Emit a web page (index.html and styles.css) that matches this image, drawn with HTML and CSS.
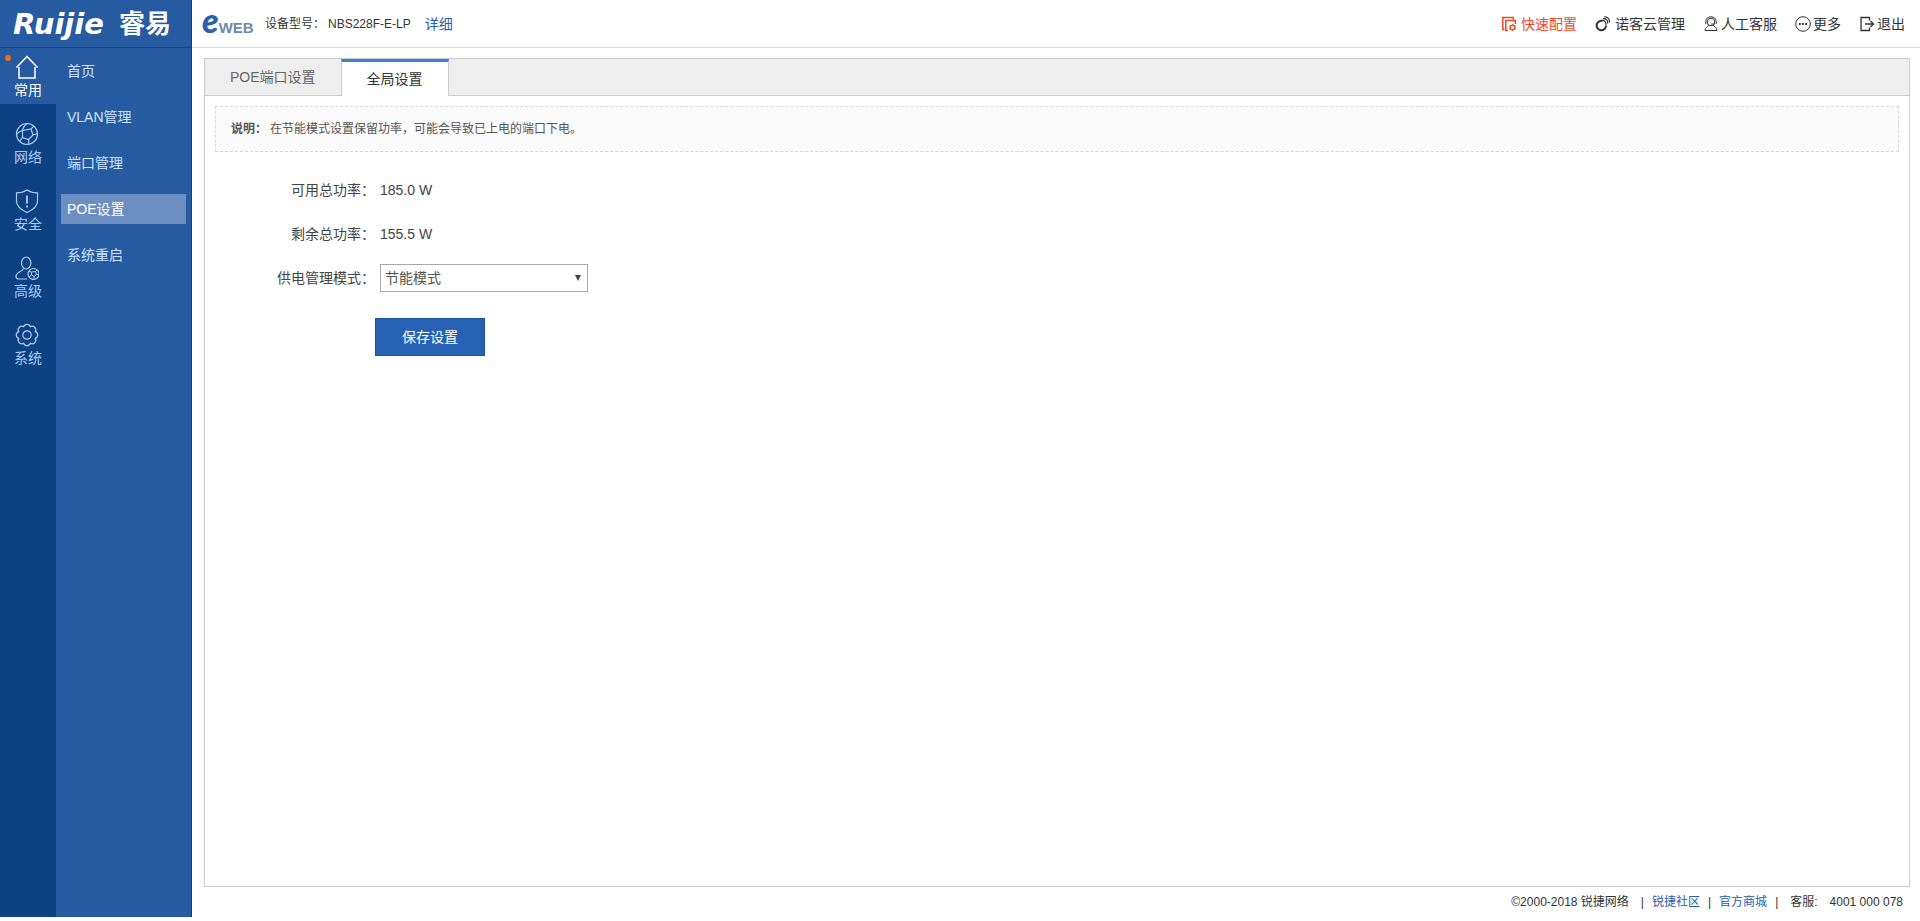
FILE: index.html
```html
<!DOCTYPE html>
<html lang="zh-CN">
<head>
<meta charset="utf-8">
<title>eWEB</title>
<link rel="stylesheet" href="styles.css">
</head>
<body>
<div class="app">
  <aside class="sidebar">
    <div class="brand"><span class="brand-en">Ruijie</span><span class="brand-cn">睿易</span></div>
    <div class="navs">
      <nav class="rail" aria-label="主导航">
        <a class="rail-item active" href="#">
          <span class="dot"></span>
          <svg viewBox="0 0 24 24"><path d="M1.500 12.500 12 1.500l10.500 11M4 12v11h16V12" stroke-width="1.500"/></svg>
          <span>常用</span>
        </a>
        <a class="rail-item" href="#">
          <svg viewBox="0 0 24 24"><circle cx="12" cy="12" r="10.500"/><path d="M7.500 8.500 16 7l2 6-4.500 4.500-6-2zM7.500 8.500C8 5 10 3 12.500 1.500M7.500 8.500C5 9 3 10.500 1.500 12.500M16 7l3-3M18 13l4.500-1.500M13.500 17.500c.5 2 .5 3 0 5M7.500 15.500 4.500 19.500"/></svg>
          <span>网络</span>
        </a>
        <a class="rail-item" href="#">
          <svg viewBox="0 0 24 24"><path d="M12 1c3 2 6.500 2.800 10.500 2.800V12c0 5.500-5 9-10.500 11.500C6.500 21 1.500 17.500 1.500 12V3.800C5.500 3.800 9 3 12 1z"/><path d="M12 6.500v8M12 16.500v2" stroke-width="1.800"/></svg>
          <span>安全</span>
        </a>
        <a class="rail-item" href="#">
          <svg viewBox="0 0 24 24"><ellipse cx="11.200" cy="7" rx="4.700" ry="6"/><path d="M8.500 12.500C8 16 1 15 1 20.500c0 2 1 2.500 3 2.500h8"/><circle cx="18.500" cy="18" r="5.500"/><path d="m16.500 16 4-.5 1 3-2.500 2-2.500-1.500zM16.500 16l-2.500-.5M20.500 15.500l1.500-1.500M21.500 18.500h2.500M19 20.500v3M16.500 19l-2.500 2" stroke-width="1"/></svg>
          <span>高级</span>
        </a>
        <a class="rail-item" href="#">
          <svg viewBox="0 0 24 24"><circle cx="12" cy="12" r="4.200"/><path d="M20.300 8.600a3.600 3.600 0 0 1 0 6.800 3.600 3.600 0 0 1-4.900 4.900 3.600 3.600 0 0 1-6.800 0 3.600 3.600 0 0 1-4.900-4.900 3.600 3.600 0 0 1 0-6.800 3.600 3.600 0 0 1 4.900-4.900 3.600 3.600 0 0 1 6.800 0 3.600 3.600 0 0 1 4.900 4.900z"/></svg>
          <span>系统</span>
        </a>
      </nav>
      <nav class="menu" aria-label="子菜单">
        <a href="#">首页</a>
        <a href="#">VLAN管理</a>
        <a href="#">端口管理</a>
        <a href="#" class="current">POE设置</a>
        <a href="#">系统重启</a>
      </nav>
    </div>
  </aside>
  <div class="page">
    <header class="topbar">
      <div class="eweb"><span class="eweb-e">e</span><span class="eweb-web">WEB</span></div>
      <span class="device">设备型号：</span>
      <span class="model">NBS228F-E-LP</span>
      <a class="detail" href="#">详细</a>
      <nav class="tools" aria-label="工具">
        <a class="quick" href="#"><svg viewBox="0 0 16 16"><path d="M3.500 13.500H1.800v-12h10.500v2M7 14.500H4.800v-10h9.500v3.500" stroke-width="1.500"/><circle cx="11.500" cy="11.500" r="2.300" stroke-width="1.500"/><path d="M11.500 8v1M11.500 14v1M8.500 9.800l.8.500M13.700 12.700l.8.500M14.500 9.800l-.8.500M9.300 12.700l-.8.500"/></svg>快速配置</a>
        <a href="#"><svg viewBox="0 0 16 16"><path d="M7.500 5A4.700 4.700 0 1 0 11 9.500" stroke-width="2"/><path d="M6.500 4.500c2.500-.8 5 1.500 4.500 4.500M8 2.800c3-.5 5.200 1.800 4.700 4.700M9.200 1c3.500-.3 5.800 2.300 5.300 5.500" stroke-width="1.200"/></svg>诺客云管理</a>
        <a class="tight" href="#"><svg viewBox="0 0 16 16"><circle cx="8" cy="6" r="3.800"/><path d="M2.800 8V5.500C3 2.500 5 .8 8 .8s5 1.700 5.200 4.700V8M6 9c-1 2-4 2-4 5.500h12c0-3.500-3-3.500-4-5.500M8 8h3.500"/></svg>人工客服</a>
        <a class="tight" href="#"><svg viewBox="0 0 16 16"><circle cx="8" cy="8" r="7.300"/><path d="M4 8h1.800M7.100 8h1.800M10.200 8H12" stroke-width="1.800"/></svg>更多</a>
        <a class="tight" href="#"><svg viewBox="0 0 16 16"><path d="M10.500 4.500v-3H2v13h8.500v-3" stroke-width="1.300"/><path d="M6 8h8.500M11.500 5l3 3-3 3" stroke-width="1.300"/></svg>退出</a>
      </nav>
    </header>
    <main class="panel">
      <div class="tabs">
        <button type="button" class="tab">POE端口设置</button>
        <button type="button" class="tab selected">全局设置</button>
      </div>
      <p class="notice"><strong>说明：</strong>在节能模式设置保留功率，可能会导致已上电的端口下电。</p>
      <form class="settings">
        <span class="label">可用总功率：</span><span>185.0 W</span>
        <span class="label">剩余总功率：</span><span>155.5 W</span>
        <label class="label" for="mode">供电管理模式：</label>
        <span class="select-wrap"><select id="mode"><option>节能模式</option></select></span>
        <button type="button" class="save">保存设置</button>
      </form>
    </main>
    <footer class="footer">
      <span class="copy">©2000-2018 锐捷网络</span>
      <span>|</span><a href="#">锐捷社区</a><span>|</span><a href="#">官方商城</a><span>|</span>
      <span class="service">客服:</span><span>4001 000 078</span>
    </footer>
  </div>
</div>
</body>
</html>
```
FILE: styles.css
```css
* { box-sizing: border-box; }
body {
  margin: 0;
  background: #fff;
  color: #333;
  font: 14px/20px "Liberation Sans", "Noto Sans CJK SC", sans-serif;
}
a { text-decoration: none; color: inherit; }
svg { fill: none; stroke: currentColor; display: block; flex: none; }
.app { display: flex; min-height: 100vh; }

.sidebar {
  width: 192px;
  flex: none;
  display: flex;
  flex-direction: column;
  margin-bottom: 4px;
  background: #265aa1;
  border-right: 1px solid #0e4184;
}
.brand {
  height: 48px;
  flex: none;
  display: flex;
  align-items: center;
  gap: 12px;
  padding-left: 13px;
  border-bottom: 1px solid #154788;
  color: #fff;
}
.brand-en { font: italic 700 29px/36px "DejaVu Sans", sans-serif; width: 94px; }
.brand-cn { font-size: 26px; line-height: 36px; font-weight: 700; }
.navs { flex: 1; display: flex; }
.rail {
  width: 56px;
  display: flex;
  flex-direction: column;
  gap: 11px;
  background: #0e4184;
}
.rail-item {
  position: relative;
  height: 56px;
  display: flex;
  flex-direction: column;
  align-items: center;
  gap: 1px;
  padding-top: 7px;
  color: #a9cdf8;
}
.rail-item svg { width: 24px; height: 24px; margin-right: 2px; stroke-width: 1.2; }
.rail-item.active { background: #265aa1; color: #fff; }
.dot {
  position: absolute;
  left: 5px;
  top: 7px;
  width: 6px;
  height: 6px;
  border-radius: 50%;
  background: #f36c1c;
}
.menu {
  flex: 1;
  display: flex;
  flex-direction: column;
  gap: 16px;
  padding: 8px 5px;
  color: #cbe3ff;
}
.menu a { padding: 5px 6px; }
.menu .current { background: #6b8fc1; color: #fff; }

.page { flex: 1; min-width: 0; display: flex; flex-direction: column; }
.topbar {
  height: 48px;
  display: flex;
  align-items: center;
  padding: 0 15px 0 10px;
  border-bottom: 1px solid #d9d9d9;
}
.eweb { display: flex; align-items: baseline; width: 63px; }
.eweb-e { font: italic 900 34px/34px Lato, sans-serif; color: #2a5fb0; }
.eweb-web { font: 700 15px/34px "Liberation Sans", sans-serif; color: #7088ab; }
.device, .model { font-size: 12px; }
.device { width: 63px; }
.model { margin-right: 14px; }
.detail { color: #2a5ba6; }
.tools { margin-left: auto; display: flex; gap: 18px; }
.tools a { display: flex; align-items: center; gap: 4px; }
.tools .tight { gap: 2px; }
.tools svg { width: 16px; height: 16px; }
.tools .quick { color: #f04a23; }

.panel { flex: 1; margin: 10px 10px 0 12px; border: 1px solid #ccc; }
.tabs {
  height: 37px;
  display: flex;
  background: #eee;
  border-bottom: 1px solid #ccc;
}
.tab {
  padding: 0 25px;
  border: 0;
  background: none;
  font: inherit;
  color: #666;
}
.tab.selected {
  margin-bottom: -1px;
  border: solid #ccc;
  border-width: 3px 1px 0;
  border-top-color: #3f80dc;
  background: #fff;
  color: #333;
}
.notice {
  margin: 10px;
  padding: 12px 15px;
  border: 1px dashed #d9d9d9;
  background: #fafafa;
  color: #555;
  font-size: 12px;
}
.notice strong { margin-right: 3px; }
.settings {
  display: grid;
  grid-template-columns: 170px 208px;
  grid-auto-rows: minmax(28px, auto);
  gap: 16px 5px;
  margin: 24px 0;
  align-items: center;
  color: #444;
}
.label { text-align: right; }
.select-wrap { position: relative; }
.select-wrap::after {
  content: "";
  position: absolute;
  right: 7px;
  top: 11px;
  border: solid transparent;
  border-width: 6px 3px 0;
  border-top-color: #444;
  pointer-events: none;
}
.select-wrap select {
  appearance: none;
  display: block;
  width: 100%;
  height: 28px;
  padding: 0 4px;
  border: 1px solid #a9a9a9;
  border-radius: 0;
  background: #fff;
  color: #555;
  font: inherit;
}
.save {
  grid-column: 2;
  width: 110px;
  height: 38px;
  margin: 10px 0 0 -5px;
  border: 1px solid #1b559e;
  background: #2762b4;
  color: #fff;
  font: inherit;
}
.footer {
  height: 34px;
  display: flex;
  justify-content: flex-end;
  align-items: center;
  gap: 8px;
  padding: 0 17px 4px 12px;
  font-size: 12px;
}
.footer a { color: #2a5ba6; }
.copy { margin-right: 4px; }
.service { margin: 0 4px; }
```
